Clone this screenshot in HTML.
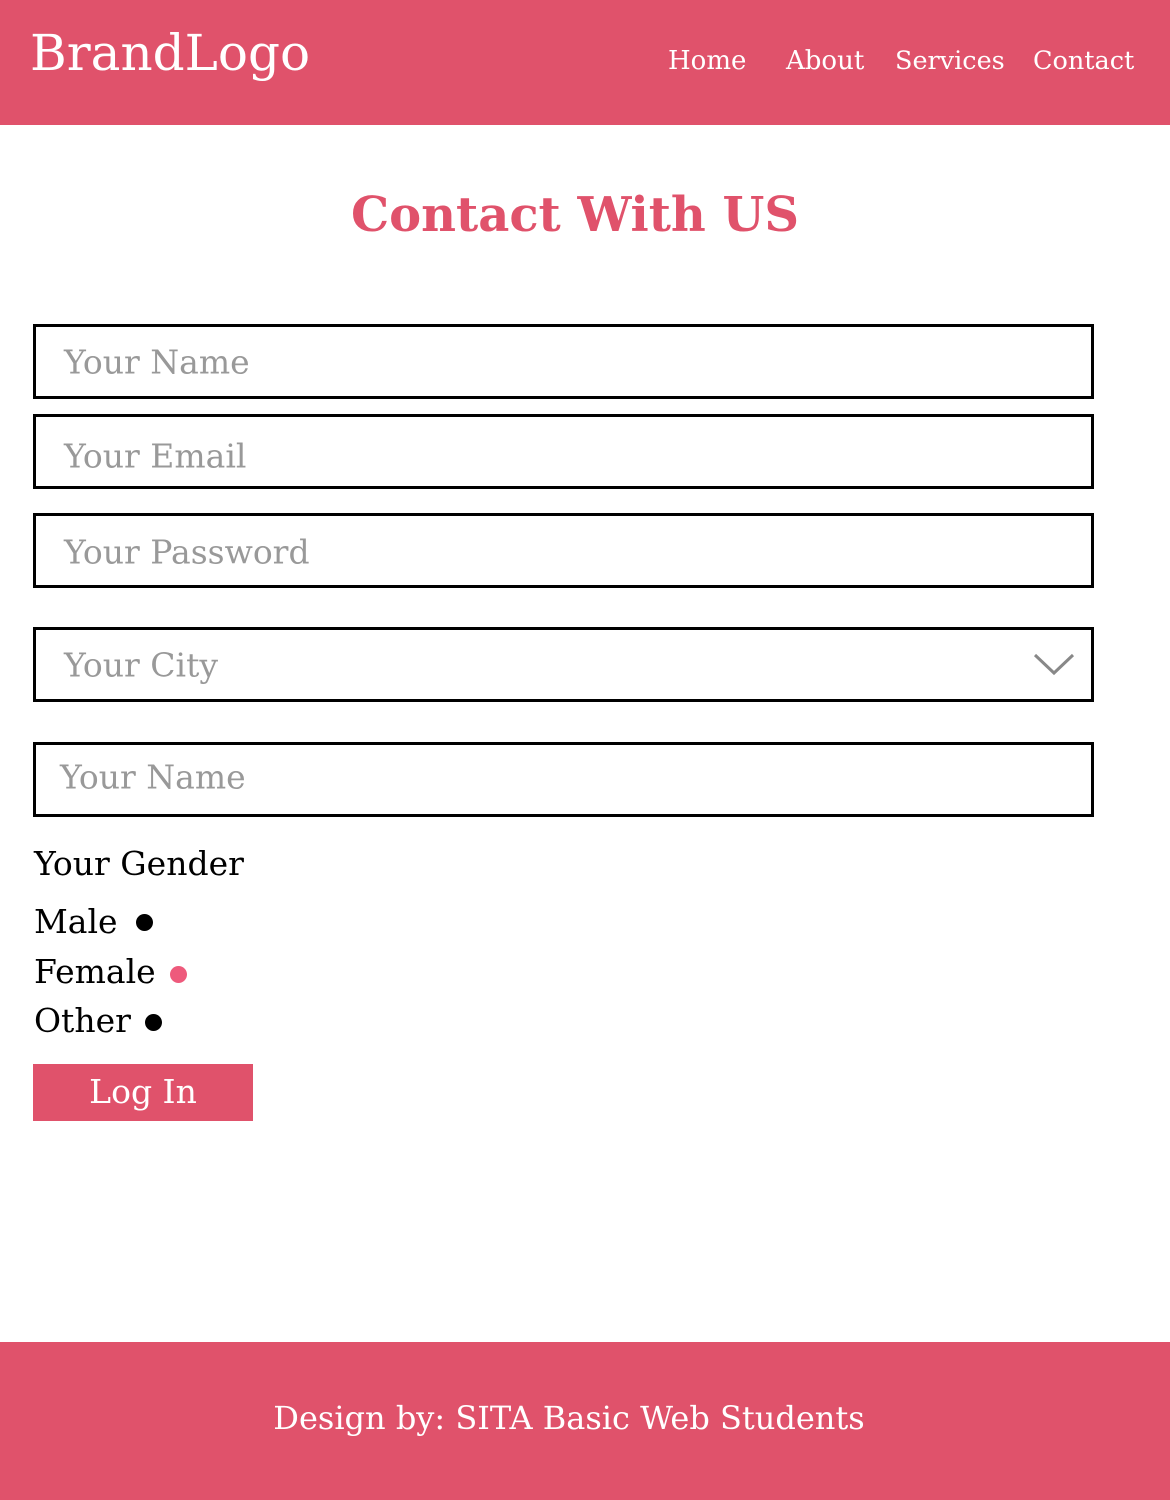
<!DOCTYPE html>
<html><head><meta charset="utf-8"><style>
*{margin:0;padding:0;box-sizing:border-box}
body{width:1170px;height:1500px;position:relative;background:#fff;font-family:"DejaVu Serif","Liberation Serif",serif;overflow:hidden}
.a{position:absolute;white-space:nowrap}
.hdr{position:absolute;left:0;top:0;width:1170px;height:125px;background:#e0526b}
.ftr{position:absolute;left:0;top:1342px;width:1170px;height:158px;background:#e0526b}
.in{position:absolute;left:33px;width:1061px;height:75px;border:3px solid #000}
.ph{position:absolute;left:28px;top:50%;transform:translateY(-50%);color:#999;font-size:33px;white-space:nowrap}
.w{color:#fff}
.t{font-size:33px;color:#000}
.dot{position:absolute;width:17px;height:17px;border-radius:50%;background:#000}
</style></head><body>
<div class="hdr"></div>
<div class="a w" style="left:30px;top:24px;font-size:50px">BrandLogo</div>
<div class="a w" style="left:668px;top:46px;font-size:26px">Home</div>
<div class="a w" style="left:786px;top:46px;font-size:26px">About</div>
<div class="a w" style="left:895px;top:46px;font-size:25.5px">Services</div>
<div class="a w" style="left:1033px;top:46px;font-size:25.5px">Contact</div>
<div class="a" style="left:0;width:1150px;text-align:center;top:187px;font-size:48px;font-weight:bold;color:#e0526b">Contact With US</div>
<div class="in" style="top:324px"><span class="ph">Your Name</span></div>
<div class="in" style="top:414px"><span class="ph" style="top:57%">Your Email</span></div>
<div class="in" style="top:513px"><span class="ph" style="top:52%">Your Password</span></div>
<div class="in" style="top:627px"><span class="ph">Your City</span>
<svg style="position:absolute;right:16px;top:22px" width="42" height="24" viewBox="0 0 42 24"><path d="M2 3 L21 21 L40 3" fill="none" stroke="#888" stroke-width="3"/></svg></div>
<div class="in" style="top:742px"><span class="ph" style="left:24px;top:46%">Your Name</span></div>
<div class="a t" style="left:34px;top:844px">Your Gender</div>
<div class="a t" style="left:34px;top:902px">Male</div><div class="dot" style="left:136px;top:914px"></div>
<div class="a t" style="left:34px;top:952px">Female</div><div class="dot" style="left:170px;top:966px;background:#ee5a7c"></div>
<div class="a t" style="left:34px;top:1001px">Other</div><div class="dot" style="left:145px;top:1014px"></div>
<div class="a" style="left:33px;top:1064px;width:220px;height:57px;background:#e0526b;color:#fff;font-size:33px;text-align:center;line-height:56px">Log In</div>
<div class="ftr"></div>
<div class="a w" style="left:0;width:1138px;text-align:center;top:1399px;font-size:32px">Design by: SITA Basic Web Students</div>
</body></html>
